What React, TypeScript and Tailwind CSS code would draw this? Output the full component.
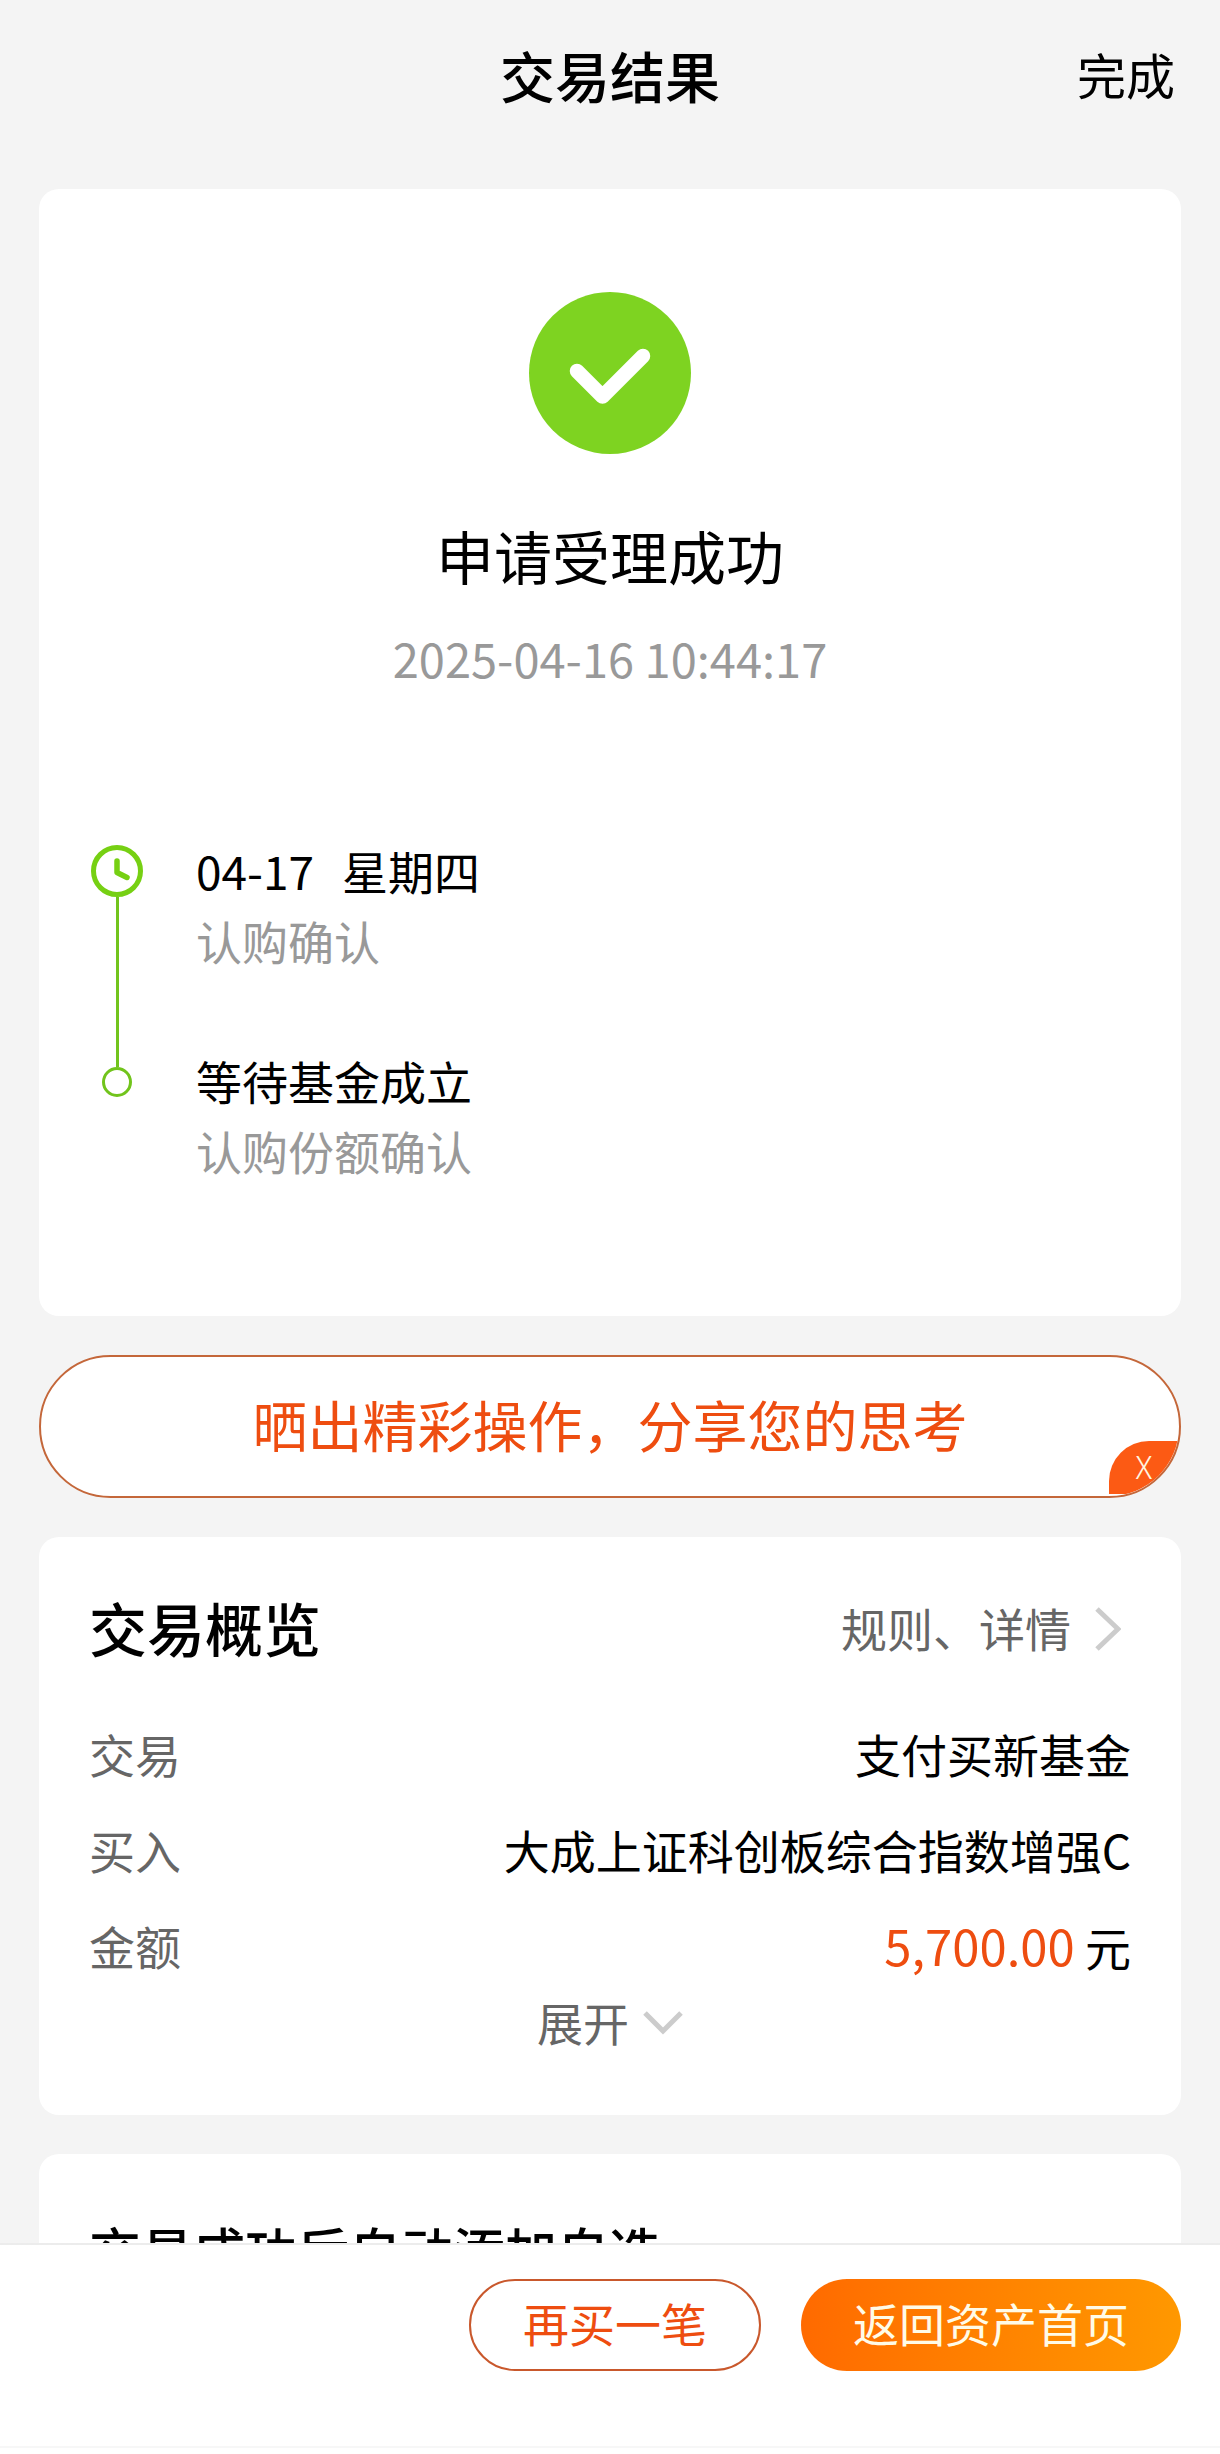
import type { ReactNode } from 'react';

const steps = [
	{ date: '04-17', title: '星期四', note: '认购确认' },
	{ date: '', title: '等待基金成立', note: '认购份额确认' },
];

function SuccessIcon() {
	return (
		<svg viewBox="0 0 162 162" className="size-[162px]" aria-hidden="true">
			<circle cx="81" cy="81" r="81" fill="#7ed321" />
			<path
				d="M48 79 L73.5 104.5 L114 64"
				fill="none"
				stroke="#fff"
				strokeWidth="14.5"
				strokeLinecap="round"
				strokeLinejoin="round"
			/>
		</svg>
	);
}

function ClockIcon() {
	return (
		<svg viewBox="0 0 52 52" className="size-[52px] shrink-0" fill="none" stroke="#76d013" aria-hidden="true">
			<circle cx="26" cy="26" r="23.5" strokeWidth="5" />
			<path d="M26 16 V27.5 L36 32.5" strokeWidth="5.5" strokeLinecap="round" strokeLinejoin="round" />
		</svg>
	);
}

function Row({ label, children }: { label: string; children: ReactNode }) {
	return (
		<div className="flex h-24 items-center justify-between">
			<dt className="text-[#666]">{label}</dt>
			<dd>{children}</dd>
		</div>
	);
}

export default function App() {
	return (
		<div className="flex h-screen flex-col bg-[#f4f4f4] font-['Noto_Sans_CJK_SC',sans-serif] text-[46px] leading-[70px] text-black">
			<header className="grid h-[148px] shrink-0 grid-cols-[1fr_auto_1fr] items-center px-[45px]">
				<h1 className="col-start-2 text-[55px] font-medium">交易结果</h1>
				<button type="button" className="justify-self-end text-[49px]">
					完成
				</button>
			</header>

			<main className="flex min-h-0 flex-1 flex-col gap-[39px] overflow-hidden px-[39px] pt-[41px]">
				<section className="shrink-0 rounded-[20px] bg-white px-[52px] pt-[103px] pb-[131px]">
					<div className="flex flex-col items-center">
						<SuccessIcon />
						<h2 className="mt-[61px] text-[58px] leading-[80px]">申请受理成功</h2>
						<time className="mt-7 text-[47px] text-[#999]">2025-04-16 10:44:17</time>
					</div>

					<ol className="mt-[142px]">
						{steps.map((step, i) => (
							<li key={step.title} className="flex gap-[53px]">
								<div className="flex w-[52px] flex-col items-center">
									{i === 0 ? (
										<>
											<div className="h-2.5 shrink-0" />
											<ClockIcon />
											<div className="w-[3px] flex-1 bg-[#71c41c]" />
										</>
									) : (
										<>
											<div className="h-[22px] w-[3px] shrink-0 bg-[#71c41c]" />
											<div className="size-[30px] rounded-full border-3 border-[#71c41c]" />
										</>
									)}
								</div>
								<div className={i === 0 ? 'pb-[70px]' : ''}>
									<p className="flex gap-7">
										{step.date && <time>{step.date}</time>}
										<span>{step.title}</span>
									</p>
									<p className="text-[#999]">{step.note}</p>
								</div>
							</li>
						))}
					</ol>
				</section>

				<div className="relative shrink-0 overflow-hidden rounded-full border-2 border-[#c4673a] bg-white">
					<button type="button" className="block w-full pt-[31px] pb-[38px] text-center text-[55px] text-[#ee4d10]">
						晒出精彩操作，分享您的思考
					</button>
					<button
						type="button"
						aria-label="关闭"
						className="absolute right-0 bottom-0.5 h-[53px] w-[70px] rounded-tl-[40px] bg-[#fc5a14] pb-1 text-center text-[32px] leading-[49px] font-light text-[#fff5e0]"
					>
						X
					</button>
				</div>

				<section className="shrink-0 rounded-[20px] bg-white px-[50px] pt-[50px] pb-[66px]">
					<div className="flex items-center justify-between">
						<h2 className="text-[58px] leading-[80px] font-medium">交易概览</h2>
						<a href="#rules" className="flex items-center gap-6 pr-2.5 text-[#666]">
							规则、详情
							<svg viewBox="0 0 26 44" className="mt-1 h-11 w-[26px]" fill="none" stroke="#ccc" strokeWidth="5" aria-hidden="true">
								<path d="M2 2 L23 22 L2 42" />
							</svg>
						</a>
					</div>
					<dl className="mt-[38px]">
						<Row label="交易">支付买新基金</Row>
						<Row label="买入">大成上证科创板综合指数增强C</Row>
						<Row label="金额">
							<span className="text-[49px] text-[#ee4d10]">5,700.00</span> 元
						</Row>
					</dl>
					<button type="button" className="mx-auto flex h-14 items-center gap-3.5 text-[#666]">
						展开
						<svg viewBox="0 0 40 24" className="mt-1 h-6 w-10" fill="none" stroke="#ccc" strokeWidth="5" aria-hidden="true">
							<path d="M2 2 L20 20 L38 2" />
						</svg>
					</button>
				</section>

				<section className="shrink-0 rounded-[20px] bg-white px-[50px] pt-[56px] pb-16">
					<h2 className="text-[52px] leading-[80px] font-medium">交易成功后自动添加自选</h2>
				</section>
			</main>

			<footer className="shrink-0 border-t-2 border-[#ececec] bg-white pb-1.5">
				<div className="flex justify-end gap-10 border-b-2 border-[#f7f7f7] px-[39px] pt-[34px] pb-[75px]">
					<button type="button" className="h-[92px] rounded-full border-2 border-[#c9582c] px-[52px] pb-1.5 text-[#ee4d10]">
						再买一笔
					</button>
					<button
						type="button"
						className="h-[92px] rounded-full bg-linear-to-r from-[#ff6a00] to-[#ff9800] px-[52px] pb-1.5 text-[#fffbe8]"
					>
						返回资产首页
					</button>
				</div>
			</footer>
		</div>
	);
}
